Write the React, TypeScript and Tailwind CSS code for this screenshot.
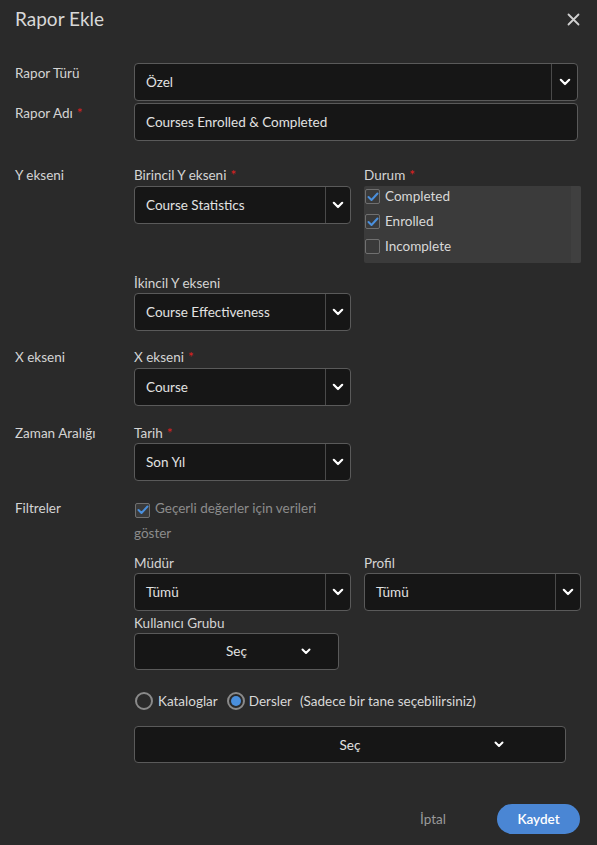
import React from "react";

const Chevron = () => (
  <svg width="12" height="8" viewBox="0 0 12 8">
    <path d="M1.8 1.8 L6 6 L10.2 1.8" fill="none" stroke="#ffffff" strokeWidth="2.2" strokeLinecap="round" strokeLinejoin="round" />
  </svg>
);

const Select = ({ value, className = "" }: { value: string; className?: string }) => (
  <div className={`flex h-[38px] rounded-[4px] border border-[#5a5a5a] bg-[#161616] ${className}`}>
    <div className="flex flex-1 items-center pl-[11px] text-[13.5px] text-[#e2e2e2]">{value}</div>
    <div className="flex w-[25px] items-center justify-center border-l border-[#4a4a4a]">
      <Chevron />
    </div>
  </div>
);

const CenterSelect = ({ className = "", chevronPos }: { className?: string; chevronPos: string }) => (
  <div className={`relative flex h-[37px] items-center justify-center rounded-[4px] border border-[#5a5a5a] bg-[#161616] ${className}`}>
    <span className="text-[13.5px] text-[#e2e2e2]">Seç</span>
    <div className={`absolute top-[14px] ${chevronPos}`}>
      <svg width="10" height="7" viewBox="0 0 10 7">
        <path d="M1.5 1.5 L5 5 L8.5 1.5" fill="none" stroke="#ffffff" strokeWidth="2" strokeLinecap="round" strokeLinejoin="round" />
      </svg>
    </div>
  </div>
);

const Check = ({ checked }: { checked: boolean }) => (
  <div className="flex h-[15px] w-[15px] items-center justify-center rounded-[2px] border border-[#707070] bg-[#3a3a3a]">
    {checked && (
      <svg width="12" height="10" viewBox="0 0 12 10">
        <path d="M1.5 5 L4.5 8 L10.5 1.5" fill="none" stroke="#4a8fdc" strokeWidth="2" strokeLinecap="round" strokeLinejoin="round" />
      </svg>
    )}
  </div>
);

const Radio = ({ on }: { on: boolean }) => (
  <div className="flex h-[18px] w-[18px] items-center justify-center rounded-full border-2 border-[#8a8a8a]">
    {on && <div className="h-[10px] w-[10px] rounded-full bg-[#4a8fdc]" />}
  </div>
);

const Req = () => <span className="ml-[4px] text-[#e02020]">*</span>;

const FieldLabel = ({ children }: { children: React.ReactNode }) => (
  <div className="h-[18px] text-[13.5px] leading-[18px] text-[#d4d4d4]">{children}</div>
);

const SideLabel = ({ children }: { children: React.ReactNode }) => (
  <div className="w-[119px] shrink-0 text-[13.5px] leading-[18px] text-[#d4d4d4]">{children}</div>
);

export default function App() {
  return (
    <div
      className="relative h-[845px] w-[597px] overflow-hidden bg-[#2a2a2a]"
      style={{ fontFamily: "Lato, 'Open Sans', sans-serif" }}
    >
      {/* Header */}
      <div className="flex h-[38px] items-center justify-between pl-[15px] pr-[17px]">
        <div className="text-[19px] text-[#d8d8d8]">Rapor Ekle</div>
        <svg width="13" height="13" viewBox="0 0 13 13">
          <path d="M1.5 1.5 L11.5 11.5 M11.5 1.5 L1.5 11.5" stroke="#d0d0d0" strokeWidth="1.8" strokeLinecap="round" />
        </svg>
      </div>

      <div className="pl-[15px] pr-[19px] pt-[25px]">
        {/* Rapor Türü */}
        <div className="flex">
          <div className="pt-[1px]">
            <SideLabel>Rapor Türü</SideLabel>
          </div>
          <div className="flex h-[38px] flex-1 rounded-[4px] border border-[#5a5a5a] bg-[#161616]">
            <div className="flex flex-1 items-center pl-[11px] text-[13.5px] text-[#e2e2e2]">Özel</div>
            <div className="flex w-[26px] items-center justify-center border-l border-[#4a4a4a]">
              <Chevron />
            </div>
          </div>
        </div>
        {/* Rapor Adı */}
        <div className="mt-[2px] flex">
          <div className="pt-[1px]">
            <SideLabel>
              Rapor Adı<Req />
            </SideLabel>
          </div>
          <div className="flex h-[38px] flex-1 items-center rounded-[4px] border border-[#5a5a5a] bg-[#161616] pl-[11px] text-[13.5px] text-[#e2e2e2]">
            Courses Enrolled &amp; Completed
          </div>
        </div>

        {/* Y ekseni */}
        <div className="mt-[25px] flex">
          <SideLabel>Y ekseni</SideLabel>
          <div className="flex flex-col">
            <div className="flex gap-[13px]">
              <div className="w-[217px]">
                <FieldLabel>
                  Birincil Y ekseni<Req />
                </FieldLabel>
                <Select value="Course Statistics" className="mt-[2px]" />
              </div>
              <div className="w-[217px]">
                <FieldLabel>
                  Durum<Req />
                </FieldLabel>
                <div className="mt-[2px] flex h-[77px] overflow-hidden rounded-[2px] bg-[#3b3b3b]">
                  <div className="-mt-[2px] flex flex-1 flex-col pl-[1px]">
                    {[
                      ["Completed", true],
                      ["Enrolled", true],
                      ["Incomplete", false],
                    ].map(([l, c]) => (
                      <div key={l as string} className="flex h-[25px] shrink-0 items-center gap-[5px]">
                        <Check checked={c as boolean} />
                        <span className="text-[13.5px] text-[#d8d8d8]">{l as string}</span>
                      </div>
                    ))}
                  </div>
                  <div className="w-[10px] bg-[#404040]" />
                </div>
              </div>
            </div>
            <div className="mt-[11px] w-[217px]">
              <FieldLabel>İkincil Y ekseni</FieldLabel>
              <Select value="Course Effectiveness" className="mt-[1px]" />
            </div>
          </div>
        </div>

        {/* X ekseni */}
        <div className="mt-[17px] flex">
          <SideLabel>X ekseni</SideLabel>
          <div className="w-[217px]">
            <FieldLabel>
              X ekseni<Req />
            </FieldLabel>
            <Select value="Course" className="mt-[2px]" />
          </div>
        </div>

        {/* Zaman Aralığı */}
        <div className="mt-[18px] flex">
          <SideLabel>Zaman Aralığı</SideLabel>
          <div className="w-[217px]">
            <FieldLabel>
              Tarih<Req />
            </FieldLabel>
            <Select value="Son Yıl" className="mt-[1px]" />
          </div>
        </div>

        {/* Filtreler */}
        <div className="mt-[18px] flex">
          <SideLabel>Filtreler</SideLabel>
          <div className="flex flex-col">
            <div className="-mt-[3px] w-[217px] text-[13.5px] leading-[25px] text-[#8c8c8c]">
              <span className="mr-[5px] inline-block translate-y-[2px] pl-[1px]">
                <Check checked={true} />
              </span>
              Geçerli değerler için verileri göster
            </div>
            <div className="mt-[8px] flex gap-[13px]">
              <div className="w-[217px]">
                <FieldLabel>Müdür</FieldLabel>
                <Select value="Tümü" className="mt-[1px]" />
              </div>
              <div className="w-[217px]">
                <FieldLabel>Profil</FieldLabel>
                <Select value="Tümü" className="mt-[1px]" />
              </div>
            </div>
            <div className="mt-[3px]">
              <FieldLabel>Kullanıcı Grubu</FieldLabel>
              <CenterSelect className="mt-[1px] w-[205px]" chevronPos="left-[166px]" />
            </div>
            <div className="mt-[21px] flex items-center text-[13.5px] text-[#d8d8d8]">
              <div className="pl-[1px]">
                <Radio on={false} />
              </div>
              <span className="ml-[5px]">Kataloglar</span>
              <div className="ml-[9px]">
                <Radio on={true} />
              </div>
              <span className="ml-[4px]">Dersler</span>
              <span className="ml-[8px]">(Sadece bir tane seçebilirsiniz)</span>
            </div>
            <CenterSelect className="mt-[15px] w-[432px]" chevronPos="left-[359px]" />
          </div>
        </div>
      </div>

      {/* Footer */}
      <div className="absolute left-0 right-0 top-[804px] flex items-center justify-end pr-[17px]">
        <span className="mr-[51px] text-[13.5px] text-[#9a9a9a]">İptal</span>
        <div className="flex h-[30px] w-[83px] items-center justify-center rounded-full bg-[#4a86d4] text-[13.5px] font-semibold text-white">
          Kaydet
        </div>
      </div>
    </div>
  );
}
